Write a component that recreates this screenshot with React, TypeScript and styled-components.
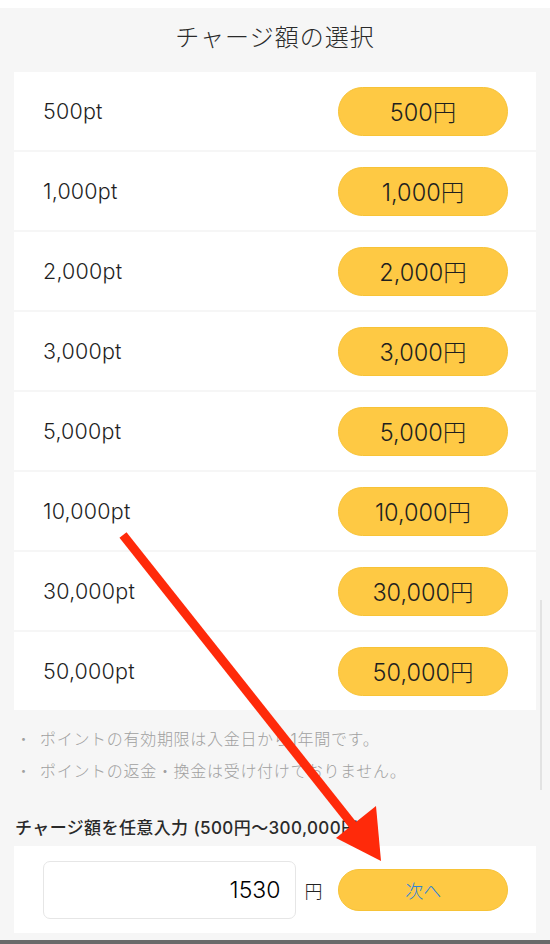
import React from "react";
import styled, { createGlobalStyle } from "styled-components";

const Global = createGlobalStyle`
  html, body { margin: 0; padding: 0; background: #ffffff; }
  body { font-family: Inter, "Noto Sans CJK JP", sans-serif; color: #222; }
  * { box-sizing: border-box; }
`;

const Page = styled.div`
  position: relative;
  width: 550px;
  height: 944px;
  padding-top: 8px;
  overflow: hidden;
`;

const Sheet = styled.div`
  background: #f6f6f6;
  height: 936px;
  display: flex;
  flex-direction: column;
`;

const Title = styled.h1`
  margin: 0;
  height: 64px;
  display: flex;
  align-items: center;
  justify-content: center;
  padding-bottom: 10px;
  font-size: 24px;
  font-weight: 300;
  letter-spacing: 1px;
  color: #2a2a2a;
`;

const List = styled.div`
  display: flex;
  flex-direction: column;
  gap: 2px;
  padding: 0 14px;
`;

const Row = styled.div`
  height: 78px;
  background: #ffffff;
  display: flex;
  align-items: center;
  justify-content: space-between;
  padding: 0 28px 0 29px;
`;

const Points = styled.span`
  font-size: 21.5px;
  font-weight: 300;
  letter-spacing: 0.2px;
  color: #1f1f1f;
`;

const PriceButton = styled.button<{ $h?: number }>`
  width: 170px;
  height: ${(p) => p.$h ?? 49}px;
  border-radius: 999px;
  border: 1px solid #f7c337;
  background: #fec944;
  font-family: inherit;
  font-size: 23.5px;
  font-weight: 300;
  color: #1f1f1f;
  display: flex;
  align-items: center;
  justify-content: center;
  padding: 0;
`;

const Notes = styled.ul`
  list-style: none;
  margin: 12px 0 0;
  padding: 0 0 0 16px;
`;

const Note = styled.li`
  height: 32px;
  display: flex;
  align-items: center;
  font-size: 16px;
  font-weight: 300;
  color: #a0a0a0;
  letter-spacing: 0.7px;
`;

const Dot = styled.span`
  width: 24px;
  font-size: 15px;
  letter-spacing: 0;
`;

const SectionLabel = styled.div`
  margin-top: 28px;
  height: 24px;
  display: flex;
  align-items: center;
  padding-left: 15px;
  font-size: 17px;
  font-weight: 500;
  letter-spacing: 0.4px;
  color: #2a2a2a;
`;

const InputPanel = styled.div`
  margin: 8px 14px 0;
  height: 87px;
  background: #ffffff;
  display: flex;
  align-items: center;
  padding: 0 28px 0 29px;
`;

const AmountBox = styled.div`
  width: 254px;
  height: 58px;
  border: 1.5px solid #e6e6e6;
  border-radius: 7px;
  display: flex;
  align-items: center;
  justify-content: flex-end;
  padding-right: 15px;
  font-size: 23px;
  font-weight: 300;
  color: #000;
`;

const Yen = styled.span`
  margin-left: 8px;
  width: 34px;
  font-size: 18px;
  font-weight: 300;
  color: #222;
`;

const NextLabel = styled.span`
  color: #2f84d8;
  font-size: 18px;
  font-weight: 300;
`;

const BottomEdge = styled.div`
  margin-top: auto;
  height: 4px;
  background: #6a6a6a;
`;

const ScrollLine = styled.div`
  position: absolute;
  left: 540px;
  top: 600px;
  width: 1.5px;
  height: 190px;
  background: #e2e2e2;
`;

const Overlay = styled.svg`
  position: absolute;
  left: 0;
  top: 0;
  pointer-events: none;
`;

const options = [
  ["500pt", "500円"],
  ["1,000pt", "1,000円"],
  ["2,000pt", "2,000円"],
  ["3,000pt", "3,000円"],
  ["5,000pt", "5,000円"],
  ["10,000pt", "10,000円"],
  ["30,000pt", "30,000円"],
  ["50,000pt", "50,000円"],
];

export default function App() {
  return (
    <>
      <Global />
      <Page>
        <Sheet>
          <Title>チャージ額の選択</Title>
          <List>
            {options.map(([pt, yen]) => (
              <Row key={pt}>
                <Points>{pt}</Points>
                <PriceButton>{yen}</PriceButton>
              </Row>
            ))}
          </List>
          <Notes>
            <Note>
              <Dot>・</Dot>ポイントの有効期限は入金日から1年間です。
            </Note>
            <Note>
              <Dot>・</Dot>ポイントの返金・換金は受け付けておりません。
            </Note>
          </Notes>
          <SectionLabel>チャージ額を任意入力 (500円〜300,000円)</SectionLabel>
          <InputPanel>
            <AmountBox>1530</AmountBox>
            <Yen>円</Yen>
            <PriceButton $h={42}>
              <NextLabel>次へ</NextLabel>
            </PriceButton>
          </InputPanel>
          <BottomEdge />
        </Sheet>
        <ScrollLine />
        <Overlay width="550" height="944" viewBox="0 0 550 944">
          <line x1="123" y1="535" x2="356" y2="829" stroke="#ff2a0a" strokeWidth="9" strokeLinecap="butt" />
          <polygon points="381,861 336,838 376,806" fill="#ff2a0a" />
        </Overlay>
      </Page>
    </>
  );
}
